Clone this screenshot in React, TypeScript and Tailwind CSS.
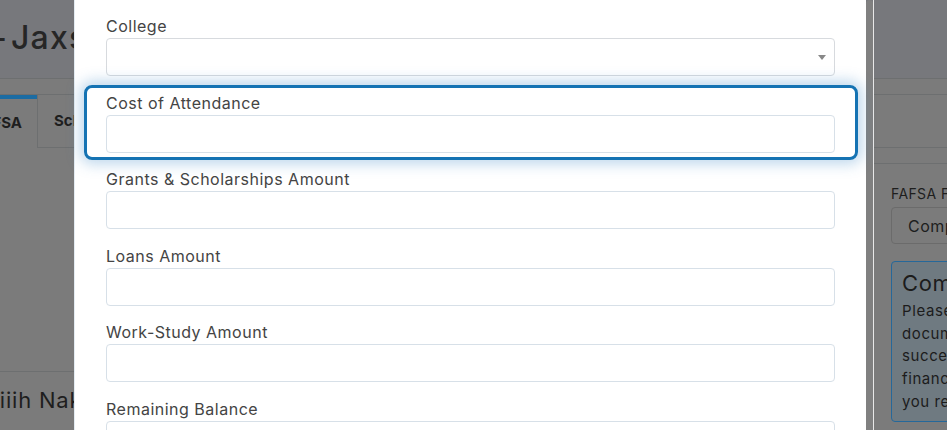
import React from "react";

const font = { fontFamily: "Inter, 'Noto Sans', sans-serif" };

// champs du formulaire d'aide financière
const fields = [
  "Grants & Scholarships Amount",
  "Loans Amount",
  "Work-Study Amount",
  "Remaining Balance",
];

function Field({ label }: { label: string }) {
  return (
    <div className="flex flex-col gap-px">
      <label className="h-[22px] text-[16px] leading-[22px] tracking-[0.5px] text-[#444] whitespace-nowrap">{label}</label>
      <input className="w-full h-[38px] rounded-[4px] border border-[#d7e0e8] bg-white outline-none" />
    </div>
  );
}

export default function App() {
  return (
    <div className="relative w-[947px] h-[430px] overflow-hidden bg-[#7b7b7b]" style={font}>
      {/* page derrière le modal (assombrie) */}
      <div className="flex flex-col h-full">
        <div className="h-[79px] shrink-0 bg-[#77787c] border-b border-[#6d6f70] flex items-center">
          <h1 className="flex mt-[-2px] text-[32px] font-medium tracking-[1.2px] text-[#262626] whitespace-nowrap">
            <span className="-ml-[8px]">-</span>
            <span className="ml-[3px]">Jaxson Miller</span>
          </h1>
        </div>
        <div className="h-[16px] shrink-0 border-b border-[#6d6f70]" />
        <div className="flex flex-1">
          <div className="w-[874px] shrink-0 flex flex-col">
            <div className="flex h-[53px]">
              <div className="w-[37px] border-t-[4px] border-[#1b6ca3] flex items-center justify-end pr-[15px] overflow-hidden">
                <span className="text-[15px] font-bold text-[#1e1e1e] whitespace-nowrap">FAFSA</span>
              </div>
              <div className="w-[120px] border border-[#6d6f70] border-t-0 flex items-center pl-[16px]">
                <span className="text-[15px] font-bold text-[#1e1e1e] whitespace-nowrap">Scholarships</span>
              </div>
            </div>
            <div className="mt-[223px] w-[80px] border-t border-[#6d6f70] pt-[15px]">
              <div className="-ml-[14px] text-[22px] leading-[26px] tracking-[0.8px] text-[#1e1e1e] whitespace-nowrap">hiiih Nakamura</div>
            </div>
          </div>

          {/* colonne de droite */}
          <div className="flex-1 flex flex-col">
            <div className="h-[53px] border-b border-[#6d6f70]" />
            <div className="h-[16px] border-b border-[#6d6f70]" />
            <div className="pl-[17px] pt-[19px] flex flex-col gap-[2px] w-[220px]">
              <div className="text-[14px] leading-[22px] tracking-[0.4px] text-[#1e1e1e] whitespace-nowrap">FAFSA Filing Status</div>
              <div className="h-[37px] rounded-[4px] border border-[#6b6b6b] flex items-center pl-[16px] text-[16px] tracking-[0.5px] text-[#1e1e1e] whitespace-nowrap">Complete</div>
              <div className="mt-[15px] h-[161px] rounded-[4px] border border-[#25689a] bg-[#6f7a81] px-[10px] pt-[6px] text-[#1c1c1c]">
                <div className="text-[22px] leading-[30px] tracking-[0.6px] whitespace-nowrap">Complete</div>
                <div className="mt-[2px] text-[15px] leading-[22.7px] tracking-[0.6px] whitespace-nowrap">
                  <div>Please upload</div>
                  <div>documents</div>
                  <div>successfully</div>
                  <div>financial aid</div>
                  <div>you receive</div>
                </div>
              </div>
            </div>
          </div>
        </div>
      </div>

      {/* modal */}
      <div className="absolute left-[74px] top-0 flex">
        <div className="w-[792px] h-[430px] bg-white border-l border-[#e4ecf2] px-[31px] pt-[15px] flex flex-col gap-[15.5px]">
          <div className="flex flex-col gap-px">
            <label className="h-[22px] text-[16px] leading-[22px] tracking-[0.5px] text-[#444]">College</label>
            <div className="h-[38px] rounded-[4px] border border-[#d7dade] bg-white flex items-center justify-end pr-[8px]">
              <span className="w-0 h-0 border-l-[4px] border-r-[4px] border-t-[5px] border-l-transparent border-r-transparent border-t-[#888]" />
            </div>
          </div>

          <div className="relative">
            <div className="absolute -left-[22px] -right-[23px] -top-[6.5px] -bottom-[7px] rounded-[8px] border-[3px] border-[#1573b3] shadow-[0_0_14px_4px_rgba(70,140,200,0.35)] pointer-events-none" />
            <Field label="Cost of Attendance" />
          </div>

          {fields.map((f) => (
            <Field key={f} label={f} />
          ))}
        </div>

        {/* barre de défilement */}
        <div className="w-[7px] h-[430px] bg-[#808080] rounded-t-[4px]" />
        <div className="w-px h-[430px] bg-[#e8e8e8]" />
      </div>
    </div>
  );
}
